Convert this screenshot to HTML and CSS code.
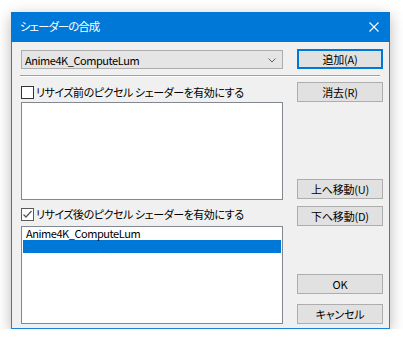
FILE: index.html
```html
<!DOCTYPE html>
<html lang="ja">
<head>
    <meta charset="UTF-8">
    <title>シェーダーの合成</title>
    <link rel="stylesheet" href="styles.css">
</head>
<body>

<div class="dialog">
    <div class="titlebar">
        <span class="title">シェーダーの合成</span>
        <span class="close">
            <svg width="10" height="10" viewBox="0 0 10 10"><path d="M0.5 0.5L9.5 9.5M9.5 0.5L0.5 9.5" stroke="#fff" stroke-width="1.1" fill="none"/></svg>
        </span>
    </div>

    <div class="content">
        <div class="top-row">
            <div class="combo">
                <span>Anime4K_ComputeLum</span>
                <svg class="chevron" width="8" height="5" viewBox="0 0 8 5"><path d="M0.5 0.5L4 4L7.5 0.5" stroke="#606060" fill="none"/></svg>
            </div>
            <button class="btn btn-default">追加(A)</button>
        </div>

        <div class="separator"></div>

        <div class="main">
            <div class="left">
                <label class="check">
                    <span class="box"></span>
                    <span>リサイズ前のピクセル シェーダーを有効にする</span>
                </label>
                <div class="list list-pre"></div>

                <label class="check check-post">
                    <span class="box">
                        <svg width="11" height="11" viewBox="0 0 11 11"><path d="M1.5 5.5L4 8L9.5 2" stroke="#5a5a5a" stroke-width="1.3" fill="none"/></svg>
                    </span>
                    <span>リサイズ後のピクセル シェーダーを有効にする</span>
                </label>
                <div class="list list-post">
                    <div class="item">Anime4K_ComputeLum</div>
                    <div class="item selected"></div>
                </div>
            </div>

            <div class="right">
                <button class="btn">消去(R)</button>
                <button class="btn btn-up">上へ移動(U)</button>
                <button class="btn btn-down">下へ移動(D)</button>
                <button class="btn btn-ok">OK</button>
                <button class="btn btn-cancel">キャンセル</button>
            </div>
        </div>
    </div>
</div>

</body>
</html>
```

FILE: styles.css
```css
* {
    margin: 0;
    padding: 0;
    box-sizing: border-box;
}
body {
    background: #fff;
    font-family: "Noto Sans CJK JP", "Noto Sans", sans-serif;
    font-size: 11px;
    letter-spacing: -0.45px;
    font-feature-settings: "palt";
    color: #000;
    padding: 12px 0 0 11px;
}
.dialog {
    width: 379px;
    border: 1px solid #1883d7;
    border-top: none;
    background: #f0f0f0;
    box-shadow: 0 4px 14px rgba(0, 0, 0, 0.28);
}
.titlebar {
    height: 30px;
    margin: 0 -1px;
    background: #0078d7;
    display: flex;
    align-items: center;
    justify-content: space-between;
    padding: 0 11px 0 9px;
    color: #fff;
}
.title {
    font-size: 11.5px;
    letter-spacing: -1px;
    line-height: 14px;
    padding-bottom: 2px;
}
.close {
    display: flex;
    padding-bottom: 1px;
}
.content {
    padding: 7px 6px 4px 9px;
}
.top-row {
    display: flex;
    gap: 14px;
}
.combo {
    width: 262px;
    height: 19px;
    margin-top: 1px;
    background: #e5e5e5;
    border: 1px solid #adadad;
    display: flex;
    align-items: center;
    justify-content: space-between;
    padding: 0 6px 0 3px;
    line-height: 14px;
}
.chevron {
    margin-top: 1px;
}
.btn {
    width: 86px;
    height: 20px;
    background: #e1e1e1;
    border: 1px solid #adadad;
    font-family: inherit;
    font-size: 11px;
    letter-spacing: -0.2px;
    font-feature-settings: "palt";
    line-height: 14px;
    color: #000;
    padding: 0;
}
.btn-default {
    border: 2px solid #0078d7;
}
.separator {
    height: 2px;
    margin: 6px 3px 0 -1px;
    border-top: 1px solid #a0a0a0;
    border-bottom: 1px solid #fff;
}
.main {
    display: flex;
    gap: 14px;
    padding-top: 5px;
}
.left {
    width: 262px;
    display: flex;
    flex-direction: column;
}
.check {
    display: flex;
    align-items: center;
    gap: 2px;
    height: 13px;
    margin-top: 4px;
    line-height: 13px;
    white-space: nowrap;
}
.check-post {
    margin-top: 8px;
}
.box {
    width: 13px;
    height: 13px;
    border: 1px solid #333;
    background: #fff;
    display: flex;
    flex-shrink: 0;
}
.check-post .box {
    border-color: #5a5a5a;
}
.list {
    height: 98px;
    background: #fff;
    border: 1px solid #828790;
    padding: 0 1px;
}
.list-pre {
    margin-top: 3px;
}
.list-post {
    margin-top: 5px;
}
.item {
    height: 13px;
    line-height: 13px;
    padding-left: 3px;
}
.item.selected {
    background: #0078d7;
}
.right {
    display: flex;
    flex-direction: column;
}
.btn-up {
    margin-top: 77px;
}
.btn-down {
    margin-top: 7px;
}
.btn-ok {
    margin-top: 48px;
}
.btn-cancel {
    margin-top: 10px;
}
```
